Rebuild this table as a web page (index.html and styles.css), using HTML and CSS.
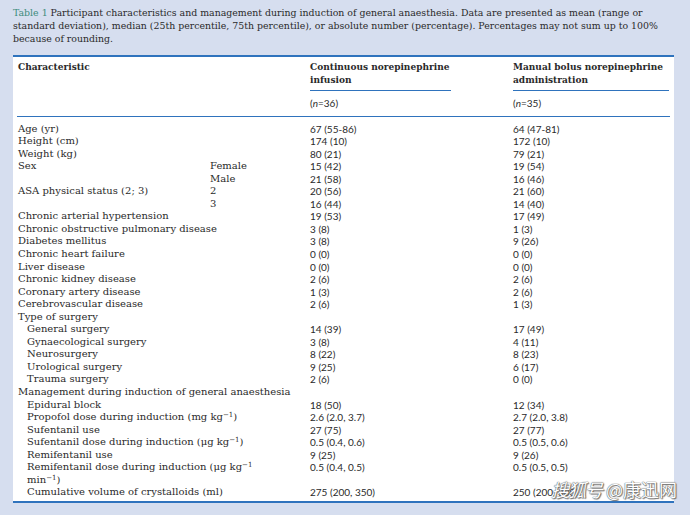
FILE: index.html
```html
<!DOCTYPE html>
<html>
<head>
<meta charset="utf-8">
<link rel="stylesheet" href="styles.css">
</head>
<body>
<div class="page">
  <p class="caption"><span class="tno">Table 1</span> Participant characteristics and management during induction of general anaesthesia. Data are presented as mean (range or standard deviation), median (25th percentile, 75th percentile), or absolute number (percentage). Percentages may not sum up to 100% because of rounding.</p>
  <div class="panel">
    <table class="tbl">
      <colgroup>
        <col class="c1"><col class="c2"><col class="c3"><col class="c4">
      </colgroup>
      <thead>
        <tr class="h1">
          <th colspan="2" class="hl">Characteristic</th>
          <th><div class="hd hd2">Continuous norepinephrine<br>infusion</div></th>
          <th><div class="hd hd3">Manual bolus norepinephrine<br>administration</div></th>
        </tr>
        <tr class="h2">
          <th colspan="2"></th>
          <th class="nn">(<i>n</i>=36)</th>
          <th class="nn">(<i>n</i>=35)</th>
        </tr>
      </thead>
      <tbody>
        <tr class="first"><td colspan="2">Age (yr)</td><td class="v">67 (55-86)</td><td class="v">64 (47-81)</td></tr>
        <tr><td colspan="2">Height (cm)</td><td class="v">174 (10)</td><td class="v">172 (10)</td></tr>
        <tr><td colspan="2">Weight (kg)</td><td class="v">80 (21)</td><td class="v">79 (21)</td></tr>
        <tr><td>Sex</td><td>Female</td><td class="v">15 (42)</td><td class="v">19 (54)</td></tr>
        <tr><td></td><td>Male</td><td class="v">21 (58)</td><td class="v">16 (46)</td></tr>
        <tr><td>ASA physical status (2; 3)</td><td>2</td><td class="v">20 (56)</td><td class="v">21 (60)</td></tr>
        <tr><td></td><td>3</td><td class="v">16 (44)</td><td class="v">14 (40)</td></tr>
        <tr><td colspan="2">Chronic arterial hypertension</td><td class="v">19 (53)</td><td class="v">17 (49)</td></tr>
        <tr><td colspan="2">Chronic obstructive pulmonary disease</td><td class="v">3 (8)</td><td class="v">1 (3)</td></tr>
        <tr><td colspan="2">Diabetes mellitus</td><td class="v">3 (8)</td><td class="v">9 (26)</td></tr>
        <tr><td colspan="2">Chronic heart failure</td><td class="v">0 (0)</td><td class="v">0 (0)</td></tr>
        <tr><td colspan="2">Liver disease</td><td class="v">0 (0)</td><td class="v">0 (0)</td></tr>
        <tr><td colspan="2">Chronic kidney disease</td><td class="v">2 (6)</td><td class="v">2 (6)</td></tr>
        <tr><td colspan="2">Coronary artery disease</td><td class="v">1 (3)</td><td class="v">2 (6)</td></tr>
        <tr><td colspan="2">Cerebrovascular disease</td><td class="v">2 (6)</td><td class="v">1 (3)</td></tr>
        <tr><td colspan="2">Type of surgery</td><td class="v"></td><td class="v"></td></tr>
        <tr><td colspan="2" class="ind">General surgery</td><td class="v">14 (39)</td><td class="v">17 (49)</td></tr>
        <tr><td colspan="2" class="ind">Gynaecological surgery</td><td class="v">3 (8)</td><td class="v">4 (11)</td></tr>
        <tr><td colspan="2" class="ind">Neurosurgery</td><td class="v">8 (22)</td><td class="v">8 (23)</td></tr>
        <tr><td colspan="2" class="ind">Urological surgery</td><td class="v">9 (25)</td><td class="v">6 (17)</td></tr>
        <tr><td colspan="2" class="ind">Trauma surgery</td><td class="v">2 (6)</td><td class="v">0 (0)</td></tr>
        <tr><td colspan="2">Management during induction of general anaesthesia</td><td class="v"></td><td class="v"></td></tr>
        <tr><td colspan="2" class="ind">Epidural block</td><td class="v">18 (50)</td><td class="v">12 (34)</td></tr>
        <tr><td colspan="2" class="ind">Propofol dose during induction (mg kg<sup>&minus;1</sup>)</td><td class="v">2.6 (2.0, 3.7)</td><td class="v">2.7 (2.0, 3.8)</td></tr>
        <tr><td colspan="2" class="ind">Sufentanil use</td><td class="v">27 (75)</td><td class="v">27 (77)</td></tr>
        <tr><td colspan="2" class="ind">Sufentanil dose during induction (&mu;g kg<sup>&minus;1</sup>)</td><td class="v">0.5 (0.4, 0.6)</td><td class="v">0.5 (0.5, 0.6)</td></tr>
        <tr><td colspan="2" class="ind">Remifentanil use</td><td class="v">9 (25)</td><td class="v">9 (26)</td></tr>
        <tr><td colspan="2" class="ind">Remifentanil dose during induction (&mu;g kg<sup>&minus;1</sup><br>min<sup>&minus;1</sup>)</td><td class="v">0.5 (0.4, 0.5)</td><td class="v">0.5 (0.5, 0.5)</td></tr>
        <tr class="last"><td colspan="2" class="ind">Cumulative volume of crystalloids (ml)</td><td class="v">275 (200, 350)</td><td class="v">250 (200, 300)</td></tr>
      </tbody>
    </table>
    <div class="wm"><span class="wm1">搜狐号</span> <span class="wm2">@康迅网</span></div>
  </div>
</div>
</body>
</html>
```

FILE: styles.css
```css
html, body {
  margin: 0;
  padding: 0;
  background: #d6deef;
}
.page {
  width: 690px;
  height: 515px;
  overflow: hidden;
}
.caption {
  margin: 0;
  padding: 6px 14px 0 13px;
  font-family: "DejaVu Serif", serif;
  font-size: 9.4px;
  line-height: 13px;
  color: #2a2a2a;
  height: 55px;
  box-sizing: border-box;
}
.tno {
  color: #3d8c7c;
}
.panel {
  position: relative;
  margin-left: 13px;
  width: 661px;
  background: #ffffff;
  border-top: 2px solid #2f73bd;
  border-bottom: 2px solid #2f73bd;
  padding: 0 4px 2px 4px;
  box-sizing: border-box;
}
.tbl {
  border-collapse: collapse;
  width: 653px;
  table-layout: fixed;
  font-family: "DejaVu Serif", serif;
  font-size: 10px;
  color: #2a2a2a;
}
.c1 { width: 192px; }
.c2 { width: 101px; }
.c3 { width: 203px; }
.c4 { width: 157px; }
.tbl th {
  text-align: left;
  vertical-align: top;
  font-weight: bold;
  font-size: 9px;
  padding: 0;
  line-height: 12.5px;
  white-space: nowrap;
}
.tbl th.hl {
  padding: 4px 0 0 1px;
}
.h1 th {
  padding-top: 4px;
}
.hd {
  padding: 0 0 4px 0;
  border-bottom: 1px solid #2f73bd;
}
.hd2 { width: 141px; }
.hd3 { width: 156px; }
.h2 th {
  border-bottom: 1px solid #2f73bd;
  padding: 6px 0 6px 0;
}
.h2 th.nn {
  font-weight: normal;
  font-family: "Lato", "Liberation Sans", sans-serif;
  font-size: 10px;
}
.tbl td {
  padding: 0 0 0 1px;
  line-height: 12.55px;
  vertical-align: top;
  white-space: nowrap;
}
.tbl tr.first td {
  padding-top: 6px;
}
.tbl td.ind {
  padding-left: 10px;
}
.tbl td.v {
  font-family: "Lato", "Liberation Sans", sans-serif;
  font-size: 10px;
  padding-left: 0;
}
sup {
  font-size: 7px;
  line-height: 0;
  vertical-align: 3px;
}
.wm {
  position: absolute;
  right: -3px;
  bottom: 1px;
  font-family: "Noto Sans CJK SC", sans-serif;
  font-size: 18px;
  line-height: 22px;
  color: #ffffff;
  text-shadow: 0 0 1px #555, 0 0 1px #555, 1px 1px 1px #777;
  white-space: nowrap;
}
.wm1 {
  font-style: italic;
  letter-spacing: -1px;
}
.wm2 {
  letter-spacing: 0px;
}
```
